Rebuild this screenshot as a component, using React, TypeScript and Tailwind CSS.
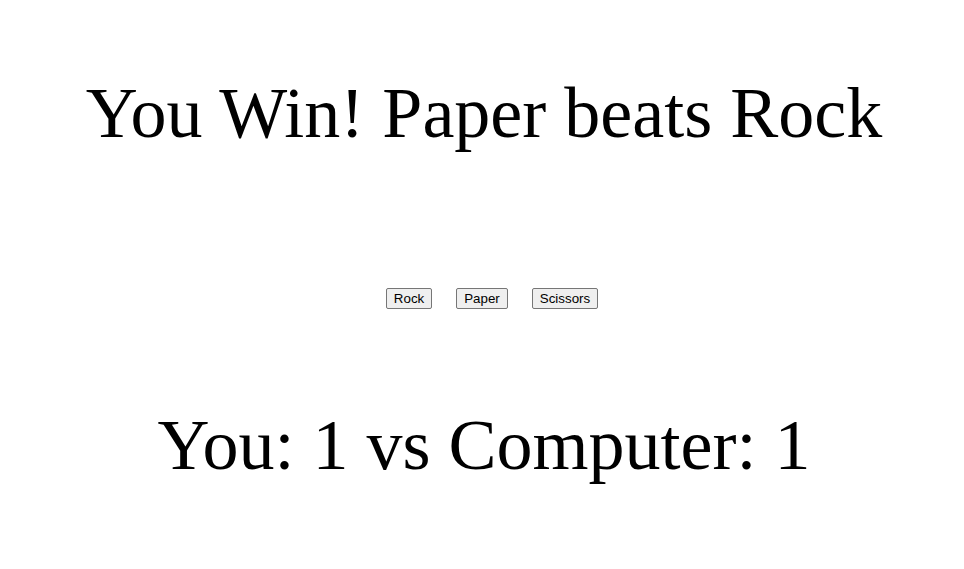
export default function App() {
  const choices = ["Rock", "Paper", "Scissors"];
  return (
    <div className="min-h-screen bg-white text-black flex flex-col items-center pt-[73px] pl-[4px] font-['Liberation_Serif',serif]">
      <h1 className="text-[72px] leading-[80px] font-normal">You Win! Paper beats Rock</h1>
      <div className="mt-[135px] flex gap-6 pl-[16px]">
        {choices.map((c) => (
          <button
            key={c}
            className="h-[21px] px-[7px] border border-[#767676] rounded-[2px] bg-[#efefef] text-[13.33px] leading-[15px] font-['Liberation_Sans',Arial,sans-serif] text-black"
          >
            {c}
          </button>
        ))}
      </div>
      <h2 className="mt-[96px] text-[72px] leading-[80px] font-normal">You: 1 vs Computer: 1</h2>
    </div>
  );
}
